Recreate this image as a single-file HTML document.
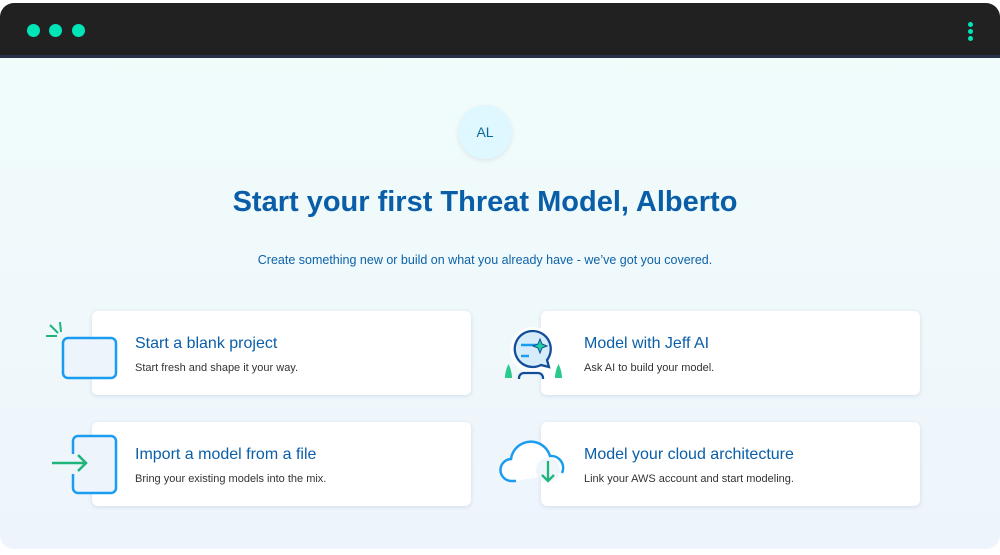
<!DOCTYPE html>
<html><head><style>
*{margin:0;padding:0;box-sizing:border-box}
body{width:1000px;height:555px;background:#fff;font-family:"Liberation Sans",sans-serif;position:relative;overflow:hidden}
.frame{position:absolute;left:0;top:3px;width:1000px;height:546px;border-radius:14px;overflow:hidden;background:linear-gradient(180deg,#f1fdfb 0%,#eff8fb 60%,#eef4fc 100%)}
.bar{position:absolute;left:0;top:0;width:1000px;height:55px;background:#212121;border-bottom:3px solid #27324a}
.dot{position:absolute;top:21px;width:13px;height:13px;border-radius:50%;background:#00e5b8}
.vd{position:absolute;left:968px;width:5px;height:5px;border-radius:50%;background:#00e5b8}
.av{position:absolute;left:458px;top:102px;width:54px;height:54px;border-radius:50%;background:#dff7fe;box-shadow:0 2px 5px rgba(0,0,0,.08);color:#0c6a9a;font-size:14px;text-align:center;line-height:54px}
h1{position:absolute;left:0;width:970px;top:183px;text-align:center;font-size:29px;color:#0a5ea8;font-weight:bold}
.sub{position:absolute;left:0;width:970px;top:250px;text-align:center;font-size:12.5px;color:#0d62a8}
.card{position:absolute;width:379px;height:84px;background:#fff;border-radius:6px;box-shadow:0 1px 4px rgba(40,70,120,.15)}
.card .t{position:absolute;left:43px;top:24px;font-size:16px;color:#0b5ea8}
.card .d{position:absolute;left:43px;top:51px;font-size:11px;color:#333}
svg{position:absolute}
</style></head><body>
<div class="frame">
<div class="bar"><div class="dot" style="left:27px"></div><div class="dot" style="left:49px"></div><div class="dot" style="left:72px"></div>
<div class="vd" style="top:19px"></div><div class="vd" style="top:26px"></div><div class="vd" style="top:33px"></div></div>
<div class="av">AL</div>
<h1>Start your first Threat Model, Alberto</h1>
<div class="sub">Create something new or build on what you already have - we’ve got you covered.</div>
<div class="card" style="left:92px;top:308px"><div class="t">Start a blank project</div><div class="d">Start fresh and shape it your way.</div></div>
<div class="card" style="left:92px;top:419px"><div class="t">Import a model from a file</div><div class="d">Bring your existing models into the mix.</div></div>
<div class="card" style="left:541px;top:308px"><div class="t">Model with Jeff AI</div><div class="d">Ask AI to build your model.</div></div>
<div class="card" style="left:541px;top:419px"><div class="t">Model your cloud architecture</div><div class="d">Link your AWS account and start modeling.</div></div>
</div>
<svg width="1000" height="555" style="left:0;top:0">
<rect x="63" y="338" width="53" height="40" rx="5" fill="#eef4fb" stroke="#1a9cf0" stroke-width="2.5"/>
<path d="M46 336h11M50 325l8 8M60 322l1 10" stroke="#1fb57a" stroke-width="2" fill="none"/>
<path d="M73 454v-13a5 5 0 0 1 5-5h33a5 5 0 0 1 5 5v47a5 5 0 0 1-5 5h-33a5 5 0 0 1-5-5v-14" fill="#eef4fb" stroke="#1a9cf0" stroke-width="2.5"/>
<path d="M52 463h34M78 455l8 8-8 8" stroke="#1fb57a" stroke-width="2.5" fill="none"/>
<circle cx="533" cy="350" r="23" fill="#fff"/>
<path d="M547 360a18 18 0 1 0-6 5l8 2z" fill="#d7ecfb" stroke="#124e99" stroke-width="2.3"/>
<path d="M521 345h16M521 356h8" stroke="#1a9cf0" stroke-width="2.5"/>
<path d="M540 339l2 5 5 2-5 2-2 5-2-5-5-2 5-2z" fill="#20d0a0" stroke="#124e99" stroke-width="1"/>
<path d="M519 379v-1a5 5 0 0 1 5-5h14a5 5 0 0 1 5 5v1" stroke="#124e99" stroke-width="2.3" fill="none"/>
<path d="M505 378c0-6 2-11 3.5-14 1.5 3 3.5 8 3.5 14z M555 378c0-6 2-11 3.5-14 1.5 3 3.5 8 3.5 14z" fill="#2cc98c"/>
<path d="M516 481h-4a11 11 0 0 1-1-22 20 20 0 0 1 39-3 12 12 0 0 1 12 17" fill="#fff" stroke="#1a9cf0" stroke-width="2.5"/>
<circle cx="548" cy="470" r="12" fill="#eef6fb"/>
<path d="M548 461v20M542 475l6 6 6-6" stroke="#1fb57a" stroke-width="2.3" fill="none"/>
</svg>
</body></html>
